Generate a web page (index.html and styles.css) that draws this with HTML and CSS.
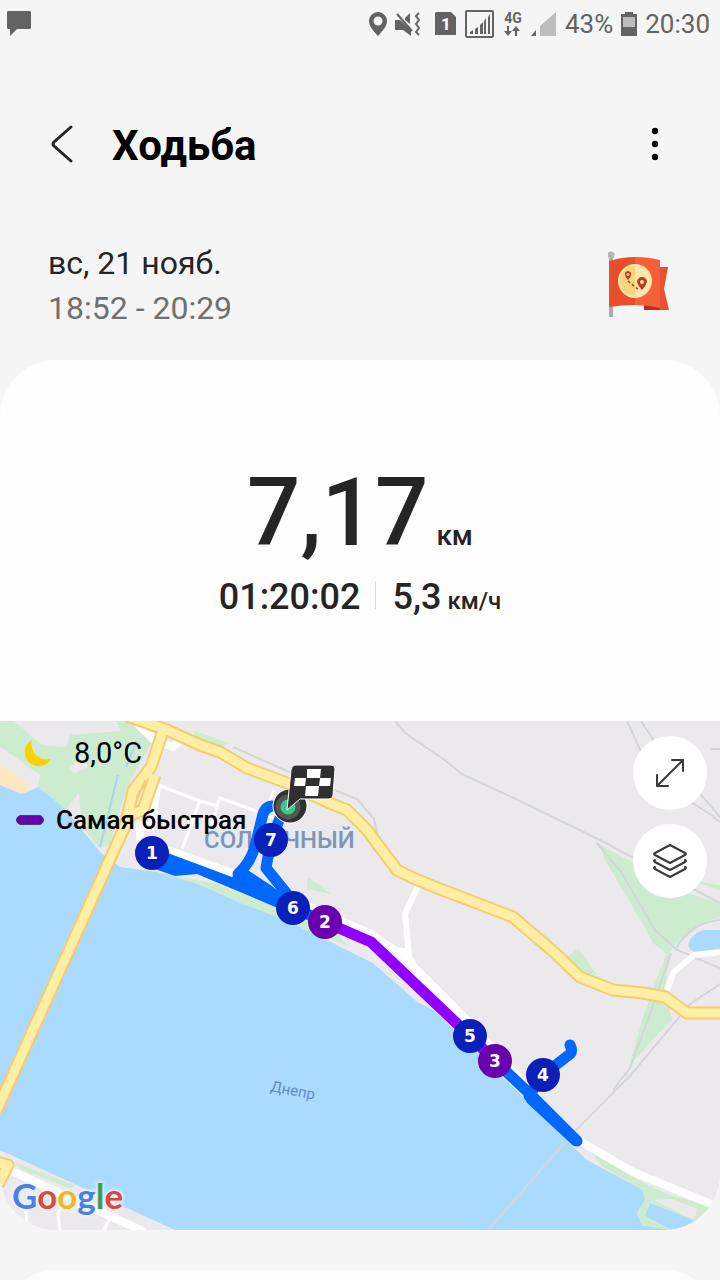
FILE: index.html
```html
<!DOCTYPE html>
<html lang="ru">
<head>
  <meta charset="UTF-8">
  <meta name="viewport" content="width=device-width, initial-scale=1.0">
  <title>Ходьба</title>
  <link rel="stylesheet" href="styles.css">
</head>
<body>
  <div class="status">
    <svg class="status-chat" width="24" height="26" viewBox="0 0 24 26"><path d="M1 0h22l1 1v16l-1 1H10l-7 7v-7H1l-1-1V1z"/></svg>
    <div class="status-right">
      <svg width="18" height="24" viewBox="0 0 18 24"><path fill-rule="evenodd" d="M9 0a9 9 0 0 0-9 9c0 5 4.500 10 9 15 4.500-5 9-10 9-15a9 9 0 0 0-9-9zm0 4.500a4.500 4.500 0 1 1 0 9 4.500 4.500 0 0 1 0-9z"/></svg>
      <svg class="mute" width="26" height="24" viewBox="0 0 26 24"><path d="M0 8h5l11 10v6l-8-6H0zM10 6l5-5v11l-5-4z"/><path class="line" d="M2 2l15 17M24 1l-3 3 3 4-3 4 3 4-3 4 3 3"/></svg>
      <svg width="22" height="24" viewBox="0 0 22 24"><path d="M1 0h15l5 5v18H0V1z"/><text class="sim" x="11" y="18">1</text></svg>
      <svg width="30" height="28" viewBox="0 0 30 28"><rect class="line" x="1" y="1" width="27" height="26" rx="1"/><path d="M5 24v-2l3-2v4zM10 24v-5l3-2v7zM15 24v-9l3-3v12zM19 24V11l2-3v16zM23 24V7l2-3v20z"/></svg>
      <svg width="20" height="26" viewBox="0 0 20 26"><text class="net" x="10" y="12">4G</text><path d="M4 15h2v5h3l-4 5-4-5h3zM12 25h2v-5h3l-4-5-4 5h3z"/></svg>
      <svg width="26" height="24" viewBox="0 0 26 24"><path d="M5 18v6H0z"/><path class="pale" d="M25 0v24H9V14z"/></svg>
      <span>43%</span>
      <svg width="16" height="24" viewBox="0 0 16 24"><path d="M4 0h8v2h4v22H0V2h4z"/><path class="pale" d="M2 5h12v10H2z"/></svg>
      <span>20:30</span>
    </div>
  </div>

  <header class="header">
    <button class="icon-btn" aria-label="Назад">
      <svg width="24" height="40" viewBox="0 0 24 40"><path d="M21 3L4 18q-2 2 0 4l17 15"/></svg>
    </button>
    <h1>Ходьба</h1>
    <button class="icon-btn dots" aria-label="Ещё">
      <svg width="8" height="34" viewBox="0 0 8 34"><circle cx="4" cy="4" r="3.200"/><circle cx="4" cy="17" r="3.200"/><circle cx="4" cy="30" r="3.200"/></svg>
    </button>
  </header>

  <section class="when">
    <div>
      <p class="date">вс, 21 нояб.</p>
      <p class="time">18:52 - 20:29</p>
    </div>
    <svg width="62" height="68" viewBox="0 0 62 68">
      <path fill="#a9adad" d="M1 6h4v60H1z"/><circle cx="3" cy="4" r="3.500" fill="#b4b8b8"/>
      <path fill="#e8502f" d="M36 16h24l-4 22 5 21H36z"/><path fill="#b92f1f" d="M36 54l16-2v7H36z"/>
      <path fill="#e94e2c" d="M1 10q13-4 26-4v48q-13 0-26 2z"/><path fill="#f65f39" d="M27 6q14 0 25 3v48q-12-3-25-3z"/>
      <circle cx="27" cy="30" r="17" fill="#ffe7a8"/><path fill="#f6d683" d="M27 15a15 15 0 0 0 0 30z"/>
      <path fill="#bd3c1c" fill-rule="evenodd" d="M20 20a3.500 3.500 0 0 0-3 4q1 3 3 5 3-3 3-5a3.500 3.500 0 0 0-3-4zm0 2a1.500 1.500 0 1 1 0 3 1.500 1.500 0 0 1 0-3zM34 26a5 5 0 0 0-5 5q1 4 5 8 4-4 5-8a5 5 0 0 0-5-5zm0 3a2 2 0 1 1 0 4 2 2 0 0 1 0-4z"/>
      <path fill="none" stroke="#bd3c1c" stroke-width="1.500" stroke-dasharray="3 2" d="M20 30l11 9"/>
    </svg>
  </section>

  <main class="card">
    <div class="summary">
      <p class="distance">7,17 <span>км</span></p>
      <div class="stats">
        <p>01:20:02</p>
        <p class="speed">5,3 <span>км/ч</span></p>
      </div>
    </div>

    <div class="map">
      <!-- map units are screen pixels, y starts at the map's top edge (721) -->
      <svg class="map-canvas" viewBox="0 721 720 509">
        <rect class="land" y="721" width="720" height="509"/>
        <path class="green" d="M0 721h14l31 26-18-4-5 16-22-12zM117 721h13l12 14 15 0-24 40-11 27-12 43-10 3-18-21-3-34-14 17-27-23 2-12-38-27v-16l45 8 25-14zM195 731l34 12-6 4-30-6z"/>
        <path class="land" d="M14 721h102l5 10-51 4-4 12-24-2zM83 755l-14 14 5 4 14-6z"/>
        <path class="sand" d="M0 764l32 23-10 7-22-9z"/>
        <path class="green" d="M157 872l60 12 70 28 50 22 12 12-39-14-70-29-50-16zM308 877l23 17-24-5z"/>
        <path class="green" d="M600 845l32 17 28 20 40 0 20 3v33q-18 2-30 14l-10 8-10 12-5 37 7 30-43 47 15-52 15-42 8-18-14-11-9-17-40-68zM567 957l11-9 19 27-17-4z"/>
        <path class="land" d="M660 868l60 23v13l-58-20z"/>
        <path class="water" d="M0 785l22 9 16-7 25 20 17 20 20 25 20 15 37 5 43 13 40 18 40 15 30 14 63 31 44 39 16 8 37 35 33 33 20 19 50 50 14 13 56 30 2 10-8 13 5 12 28 5H175L0 1150z"/>
        <path class="water" d="M688 945q2-10 15-15h17v20l-20 3q-9 0-12-8z"/>
        <path class="green" d="M590 1151l57 34 23 10 50 14v21h-50l-28-5-5-12 8-13-2-10-40-23z"/>
        <path class="land" d="M654 1200l18-1 26 10-4 11z"/>
        <path class="water" d="M650 1203l43 17 10 10h-31l-27-14z"/>
        <path class="green" d="M14 1162l60 23-3 4-50-20z"/>
        <g class="rail">
          <path d="M395 721l10 12 41 28 16 13 60 28 80 39 26 14 92 48M597 843l24 29 34 58 22 20 43 18M627 721l13 28 22 35 48 30 10 8M641 721l16 24 53 60 10 12M711 749h9M233 747l54 24 70 28 17 20 4 18"/>
          <path d="M720 984l-30 20-60 72-54 54-88 100M671 953l-16 47-25 68-17 22M675 950q16-28 45-30"/>
          <path class="stream" d="M135 745l-9 22M118 775l-10 40-8 32"/>
        </g>
        <g class="street">
          <path class="small" d="M158 785l42 16 17 5 3-8 55 20M200 801l-18 48M274 790l-8 20M217 808l-10 30"/>
          <path d="M135 721l20 20 18 6 12-12M157 785l-5 42-12-2 0 15 92 33 55 24 84 37 32 22 34 34 30 30 106 118 10 5 50 29 90 37"/>
          <path class="mid" d="M418 886l-13 28 4 42 14 28M396 950l13 2M667 990l7-18 20-17 26-3"/>
          <path d="M5 1168l140 64"/><path class="small" d="M26 1206l1 24M64 1200l-6 14 2 18M112 1214l-8 16"/>
        </g>
        <g class="road-edge">
          <path d="M127 716l40 14 33 15 20 7 27 16 40 15 40 19 20 8 20 20 30 40 16 8 27 11 73 28 42 36 25 24 33 13 30 3 22 4 22 16 33 0"/>
          <path d="M165 725l-14 42-18 24-8 35-60 133L-4 1112M155 775l-12 35-12 5M-4 1162l12 3-10 20"/>
        </g>
        <g class="road">
          <path d="M127 716l40 14 33 15 20 7 27 16 40 15 40 19 20 8 20 20 30 40 16 8 27 11 73 28 42 36 25 24 33 13 30 3 22 4 22 16 33 0"/>
          <path d="M165 725l-14 42-18 24-8 35-60 133L-4 1112M155 775l-12 35-12 5M-4 1162l12 3-10 20"/>
        </g>
        <path class="ramp" d="M145 780l-10 25"/>

        <text class="place" x="204" y="848">СОЛНЕЧНЫЙ</text>
        <text class="river" transform="translate(270 1091) rotate(11)">Днепр</text>

        <path class="walk-fill" d="M165 852l67 25 11-10 29 19 15 12v14l-47-20-43-18-22 2-23-8z"/>
        <path class="walk" d="M272 806q-8 1-10 12l-7 28q-4 16-17 28M280 818l-9 22-5 28 26 32 2 8 31 14"/>
        <path class="walk" d="M495 1061l35 33 47 47M531 1099l45 42M529 1096l14-21 27-21q3-3 0-9"/>
        <path class="walk fast" d="M325 922l46 20 99 94 25 25"/>

        <circle cx="290" cy="806" r="17.500" fill="#fff"/><circle cx="290" cy="806" r="16.500" fill="#303030"/>
        <circle cx="288" cy="807" r="10" fill="#3cc88b" stroke="#555" stroke-width="5"/>
        <path class="finish" d="M296 765h35q4 0 4 4l-2 26q0 4-4 4h-29l-13 11 4-40q1-5 5-5z"/>
        <path fill="#fff" d="M307 769h14l-1 9h11l-1 8h-11l-1 10h-13l1-10h-12l1-8h12z"/><path fill="#303030" d="M306 778h14l-1 8h-14z"/>

        <g class="pins">
          <circle cx="152" cy="853" r="17"/><text x="152" y="859">1</text>
          <circle cx="271" cy="840" r="17"/><text x="271" y="846">7</text>
          <circle cx="293" cy="908" r="17"/><text x="293" y="914">6</text>
          <circle class="violet" cx="325" cy="922" r="17"/><text x="325" y="928">2</text>
          <circle cx="470" cy="1036" r="17"/><text x="470" y="1042">5</text>
          <circle class="violet" cx="495" cy="1061" r="17"/><text x="495" y="1067">3</text>
          <circle cx="543" cy="1075" r="17"/><text x="543" y="1081">4</text>
        </g>
      </svg>

      <div class="map-info">
        <p class="weather">
          <svg width="28" height="28" viewBox="0 0 28 28"><path fill="#ffd000" d="M8 1A14 14 0 1 0 27 20Q17 22 11 15 6 8 8 1z"/></svg>
          8,0°C
        </p>
        <p class="legend"><i></i>Самая быстрая</p>
      </div>
      <div class="map-tools">
        <button aria-label="Развернуть карту">
          <svg width="32" height="32" viewBox="0 0 32 32"><path d="M3 29L29 3M18 3h11v11M3 18v11h11"/></svg>
        </button>
        <button aria-label="Слои карты">
          <svg width="34" height="34" viewBox="0 0 34 34"><path d="M17 1l15 8q2 1 0 2l-15 8-15-8q-2-1 0-2zM2 16q-2 1 0 2l15 8 15-8q2-1 0-2M2 23q-2 1 0 2l15 8 15-8q2-1 0-2"/></svg>
        </button>
      </div>
      <p class="google"><span class="b">G</span><span class="r">o</span><span class="y">o</span><span class="b">g</span><span class="g">l</span><span class="r">e</span></p>
    </div>
  </main>
  <section class="next"></section>
</body>
</html>
```
FILE: styles.css
```css
* {
  box-sizing: border-box;
}
body {
  display: flex;
  flex-direction: column;
  margin: 0;
  height: 100vh;
  background: #f5f5f5;
  color: #252525;
  font-family: Roboto, "Noto Sans", sans-serif;
}
p, h1 {
  margin: 0;
}
button {
  padding: 0;
  border: 0;
  background: none;
}
svg {
  display: block;
}

/* status bar */
.status {
  display: flex;
  flex-shrink: 0;
  justify-content: space-between;
  align-items: center;
  height: 48px;
  padding: 0 10px 0 7px;
  color: #636363;
  fill: #636363;
  font-size: 26px;
}
.status-right {
  display: flex;
  align-items: center;
  gap: 8px;
}
.mute {
  margin-right: 6px;
}
.status .line {
  fill: none;
  stroke: #636363;
  stroke-width: 2;
}
.status .pale {
  fill: #bdbdbd;
}
.sim {
  fill: #fff;
  font-size: 17px;
  font-weight: 700;
  text-anchor: middle;
}
.net {
  font-size: 14px;
  font-weight: 700;
  text-anchor: middle;
}

/* title */
.header {
  display: flex;
  flex-shrink: 0;
  align-items: center;
  height: 192px;
  padding: 0 61px 0 48px;
}
.header h1 {
  flex: 1;
  margin-left: 36px;
  padding-top: 4px;
  color: #000;
  font-size: 42px;
  line-height: 48px;
}
.icon-btn {
  display: flex;
  justify-content: center;
  width: 28px;
}
.icon-btn.dots {
  width: 8px;
}
.icon-btn path {
  fill: none;
  stroke: #252525;
  stroke-width: 3;
  stroke-linecap: round;
}
.when {
  display: flex;
  flex-shrink: 0;
  justify-content: space-between;
  height: 120px;
  padding: 1px 50px 0 48px;
  font-size: 32px;
  line-height: 45px;
}
.when svg {
  margin-top: 10px;
}
.time {
  color: #707070;
}

/* workout card */
.card {
  flex-shrink: 0;
  border-radius: 56px;
  background: #fdfdfd;
  overflow: hidden;
}
.summary {
  height: 361px;
  padding-top: 97px;
  font-weight: 500;
}
.distance {
  display: flex;
  justify-content: center;
  align-items: baseline;
  gap: 8px;
  height: 112px;
  font-size: 94px;
  line-height: 112px;
}
.distance span {
  font-size: 28px;
  line-height: 32px;
}
.stats {
  display: flex;
  justify-content: center;
  font-size: 36px;
  line-height: 56px;
}
.speed {
  display: flex;
  align-items: baseline;
  gap: 6px;
  position: relative;
  padding-left: 32px;
}
.speed::before {
  content: "";
  position: absolute;
  top: 12px;
  left: 15px;
  width: 1px;
  height: 28px;
  background: #dcdcdc;
}
.speed span {
  font-size: 24px;
}

/* top edge of the following card */
.next {
  flex: 1;
  margin-top: 40px;
  overflow: hidden;
}
.next::before {
  content: "";
  display: block;
  height: 112px;
  border-radius: 56px;
  background: #fdfdfd;
}

/* map */
.map {
  position: relative;
}
.map-canvas {
  width: 100%;
}
.land { fill: #ebe9ec; }
.green { fill: #cdeccf; }
.sand { fill: #fbe7c0; }
.water { fill: #abdaff; }
.rail, .street, .road, .road-edge {
  fill: none;
  stroke-linejoin: round;
}
.rail {
  stroke: #d3d6d8;
  stroke-width: 2;
}
.rail .stream {
  stroke: #a9d3f5;
}
.street {
  stroke: #fff;
  stroke-width: 8;
}
.street .mid { stroke-width: 6; }
.street .small { stroke-width: 3; }
.road-edge {
  stroke: #f3cd72;
  stroke-width: 13;
}
.road {
  stroke: #ffeea3;
  stroke-width: 9;
}
.ramp {
  stroke: #f3cd72;
  stroke-width: 2;
}
.place {
  fill: #8493ae;
  stroke: #e2ebf6;
  stroke-width: 4;
  paint-order: stroke;
  font-size: 24px;
  font-weight: 500;
}
.river {
  fill: #5e8ac4;
  font-size: 15px;
}
.walk {
  fill: none;
  stroke: #0068ff;
  stroke-width: 11;
  stroke-linecap: round;
  stroke-linejoin: round;
}
.walk-fill {
  fill: #0068ff;
}
.fast {
  stroke: #9000ff;
}
.finish {
  fill: #303030;
  stroke: #fff;
  stroke-width: 1;
}
.pins {
  fill: #0b20b8;
}
.pins .violet {
  fill: #6800ae;
}
.pins text {
  fill: #fff;
  font: bold 17px "DejaVu Sans", sans-serif;
  text-anchor: middle;
}

/* things lying over the map */
.google {
  position: absolute;
  bottom: 14px;
  left: 12px;
  font: bold 35px/42px Lato, sans-serif;
  text-shadow: 0 0 3px #e9f3fa, 0 0 4px #e9f3fa, 0 0 5px #e9f3fa;
}
.google .b { color: #4a80e0; }
.google .r { color: #d8483c; }
.google .y { color: #f0b921; }
.google .g { color: #3a9d58; }
.map-info {
  position: absolute;
  top: 10px;
  left: 16px;
  color: #000;
}
.weather {
  display: flex;
  align-items: center;
  gap: 22px;
  padding-left: 8px;
  font-size: 29px;
  line-height: 44px;
}
.legend {
  display: flex;
  align-items: center;
  gap: 12px;
  margin-top: 24px;
  font-size: 26px;
  font-weight: 500;
  line-height: 42px;
}
.legend i {
  width: 28px;
  height: 10px;
  border: 1px solid #4a3a66;
  border-radius: 5px;
  background: #6800ae;
}
.map-tools {
  position: absolute;
  top: 15px;
  right: 13px;
  display: grid;
  gap: 14px;
}
.map-tools button {
  display: grid;
  place-items: center;
  width: 74px;
  height: 74px;
  border-radius: 50%;
  background: #fff;
}
.map-tools path {
  fill: none;
  stroke: #3a3a3a;
  stroke-width: 2;
  stroke-linecap: round;
  stroke-linejoin: round;
}
```
